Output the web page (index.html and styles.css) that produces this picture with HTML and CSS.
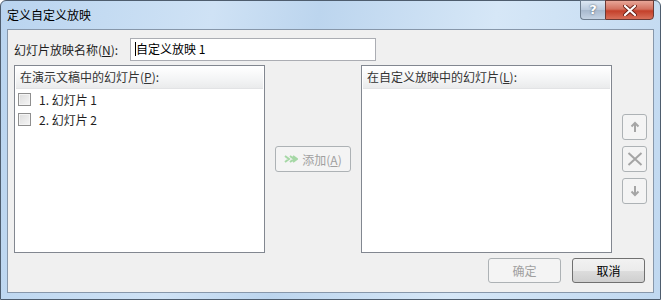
FILE: index.html
```html
<!DOCTYPE html>
<html lang="zh-CN">
<head>
    <meta charset="UTF-8">
    <meta name="viewport" content="width=device-width, initial-scale=1.0">
    <title>定义自定义放映</title>
    <link rel="stylesheet" href="styles.css">
</head>
<body>
    <div class="ventana">
        <div class="barra_titulo">
            <span class="titulo">定义自定义放映</span>
            <div class="botones_ventana">
                <span class="btn_ayuda">?</span>
                <span class="btn_cerrar">
                    <svg width="14" height="11" viewBox="0 0 14 11">
                        <path d="M2 1 L12 10 M12 1 L2 10" stroke="#6b2218" stroke-width="4" stroke-linecap="round"/>
                        <path d="M2 1 L12 10 M12 1 L2 10" stroke="#ffffff" stroke-width="2.2" stroke-linecap="round"/>
                    </svg>
                </span>
            </div>
        </div>
        <div class="cliente">
            <div class="fila_nombre">
                <label class="etiqueta">幻灯片放映名称(<u>N</u>):</label>
                <div class="caja_nombre"><span class="cursor"></span><span>自定义放映 1</span></div>
            </div>
            <div class="fila_listas">
                <div class="lista">
                    <div class="cabecera">在演示文稿中的幻灯片(<u>P</u>):</div>
                    <div class="item"><span class="check"></span><span>1. 幻灯片 1</span></div>
                    <div class="item"><span class="check"></span><span>2. 幻灯片 2</span></div>
                </div>
                <div class="boton boton_anadir">
                    <svg width="14" height="8" viewBox="0 0 14 8">
                        <path d="M1 1 L5 4 L1 7 M6 1 L10 4 L6 7 M9 1 L13 4 L9 7" fill="none" stroke="#a6d8a6" stroke-width="2"/>
                    </svg>
                    <span>添加(<u>A</u>)</span>
                </div>
                <div class="lista">
                    <div class="cabecera">在自定义放映中的幻灯片(<u>L</u>):</div>
                </div>
                <div class="botones_lado">
                    <div class="boton boton_icono">
                        <svg width="10" height="12" viewBox="0 0 10 12"><path d="M5 11 V2 M1.5 5.5 L5 2 L8.5 5.5" fill="none" stroke="#a5a5a5" stroke-width="2"/></svg>
                    </div>
                    <div class="boton boton_icono">
                        <svg width="16" height="14" viewBox="0 0 16 14"><path d="M1.5 1 L14.5 13 M14.5 1 L1.5 13" stroke="#a5a5a5" stroke-width="2"/></svg>
                    </div>
                    <div class="boton boton_icono">
                        <svg width="10" height="12" viewBox="0 0 10 12"><path d="M5 1 V10 M1.5 6.5 L5 10 L8.5 6.5" fill="none" stroke="#a5a5a5" stroke-width="2"/></svg>
                    </div>
                </div>
            </div>
            <div class="fila_botones">
                <div class="boton boton_dialogo">确定</div>
                <div class="boton boton_dialogo activo">取消</div>
            </div>
        </div>
    </div>
</body>
</html>
```

FILE: styles.css
```css
body{
    margin:0;
    background-color:#ffffff;
    font-family:"Noto Sans CJK SC", "Liberation Sans", sans-serif;
    font-size:12px;
    color:#1e1e1e;
}
.ventana{
    width:661px;
    height:300px;
    box-sizing:border-box;
    border:1px solid #4e5d6e;
    border-radius:6px 6px 0 0;
    background:linear-gradient(100deg, #b9d4ef 0%, #cfe2f5 30%, #bcd5ee 45%, #d6e7f7 70%, #c0d8f0 100%);
    display:flex;
    flex-direction:column;
}
.barra_titulo{
    height:28px;
    display:flex;
    justify-content:space-between;
    align-items:flex-start;
}
.titulo{
    margin-left:6px;
    margin-top:5px;
    font-size:12px;
    color:#000000;
}
.botones_ventana{
    display:flex;
    margin-right:6px;
    margin-top:-1px;
}
.btn_ayuda{
    width:25px;
    height:20px;
    box-sizing:border-box;
    border:1px solid #6d7d8f;
    border-right:none;
    border-radius:0 0 0 4px;
    background:linear-gradient(#dce7f3, #b9c9dc 50%, #a7b8cd 51%, #c4d3e4);
    color:#ffffff;
    font-family:"DejaVu Sans", sans-serif;
    font-weight:bold;
    font-size:13px;
    text-align:center;
    line-height:18px;
    text-shadow:0 0 2px #334455;
}
.btn_cerrar{
    width:49px;
    height:20px;
    box-sizing:border-box;
    border:1px solid #6b3a35;
    border-radius:0 0 4px 0;
    background:linear-gradient(#e8a597, #d3715f 45%, #c4402a 55%, #d8705a);
    display:flex;
    justify-content:center;
    align-items:center;
}
.cliente{
    flex:1;
    margin:0 6px 6px 6px;
    border:1px solid #8797aa;
    background-color:#f0f0f0;
    display:flex;
    flex-direction:column;
}
.fila_nombre{
    display:flex;
    align-items:center;
    padding:7px 0 0 6px;
    height:24px;
}
.etiqueta{
    width:116px;
}
.etiqueta u, .cabecera u, .boton u{
    text-decoration:underline;
}
.caja_nombre{
    width:246px;
    height:23px;
    box-sizing:border-box;
    border:1px solid #abadb3;
    background-color:#ffffff;
    padding-left:4px;
    line-height:20px;
    display:flex;
    align-items:center;
    color:#000000;
}
.cursor{
    width:1px;
    height:14px;
    background-color:#000000;
}
.fila_listas{
    display:flex;
    align-items:center;
    padding:4px 0 0 6px;
}
.lista{
    width:251px;
    height:188px;
    box-sizing:border-box;
    border:1px solid #828790;
    background-color:#ffffff;
    padding:1px;
}
.cabecera{
    height:21px;
    line-height:20px;
    padding-left:4px;
    background:linear-gradient(#ffffff, #f3f4f5 60%, #eaebec);
    border-bottom:1px solid #e2e3e5;
    color:#333333;
}
.item{
    height:20px;
    display:flex;
    align-items:center;
    padding-left:2px;
    color:#1e1e1e;
}
.check{
    width:13px;
    height:13px;
    box-sizing:border-box;
    border:1px solid #8f8f8f;
    background:linear-gradient(135deg, #dcdcdc, #f6f6f6);
    box-shadow:inset 0 0 0 1px #f4f4f4;
    margin-right:8px;
}
.boton{
    box-sizing:border-box;
    border:1px solid #adb2b5;
    border-radius:3px;
    background-color:#f4f4f4;
    display:flex;
    justify-content:center;
    align-items:center;
    color:#a0a0a0;
}
.boton_anadir{
    width:76px;
    height:26px;
    margin:0 10px;
    gap:4px;
}
.botones_lado{
    display:flex;
    flex-direction:column;
    gap:6px;
    margin-left:10px;
}
.boton_icono{
    width:25px;
    height:26px;
}
.fila_botones{
    display:flex;
    justify-content:flex-end;
    gap:11px;
    padding:5px 8px 0 0;
}
.boton_dialogo{
    width:73px;
    height:25px;
}
.boton_dialogo.activo{
    border-color:#707070;
    background:linear-gradient(#f2f2f2, #ebebeb 50%, #dddddd 51%, #cfcfcf);
    color:#000000;
}
```
